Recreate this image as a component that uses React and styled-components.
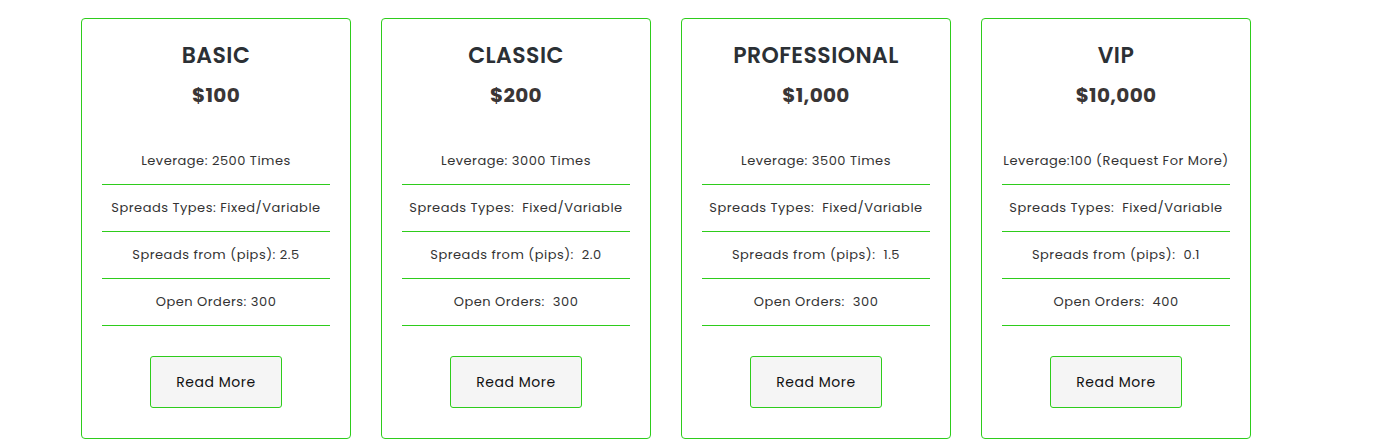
import React from "react";
import styled, { createGlobalStyle } from "styled-components";

const Global = createGlobalStyle`
  html, body { margin: 0; padding: 0; background: #fff; }
  body { font-family: "Poppins", "Inter", "Noto Sans", sans-serif; }
`;

const GREEN = "#2ecc1c";

const Page = styled.div`
  display: flex;
  gap: 30px;
  padding: 18px 0 0 81px;
`;

const Card = styled.div`
  width: 228px;
  border: 1px solid ${GREEN};
  border-radius: 4px;
  padding: 22px 20px 30px;
  box-sizing: content-box;
  display: flex;
  flex-direction: column;
  align-items: stretch;
`;

const Title = styled.h3`
  margin: 0;
  font-size: 22px;
  line-height: 30px;
  font-weight: 600;
  text-align: center;
  color: #2b3035;
  letter-spacing: 0.45px;
`;

const Price = styled.div`
  margin-top: 9px;
  font-size: 20px;
  line-height: 30px;
  font-weight: 700;
  text-align: center;
  color: #3a3636;
  letter-spacing: 0.3px;
`;

const List = styled.ul`
  list-style: none;
  margin: 28px 0 0;
  padding: 0;
`;

const Item = styled.li`
  height: 46px;
  border-bottom: 1px solid ${GREEN};
  display: flex;
  align-items: center;
  justify-content: center;
  font-size: 13px;
  letter-spacing: 0.5px;
  color: #333;
  white-space: pre;
`;

const Button = styled.button`
  align-self: center;
  margin-top: 30px;
  width: 132px;
  height: 52px;
  background: #f5f5f5;
  border: 1px solid ${GREEN};
  border-radius: 3px;
  font-family: inherit;
  font-size: 14px;
  letter-spacing: 0.5px;
  color: #111;
  cursor: pointer;
`;

const plans = [
  { name: "BASIC", price: "$100", items: ["Leverage: 2500 Times", "Spreads Types: Fixed/Variable", "Spreads from (pips): 2.5", "Open Orders: 300"] },
  { name: "CLASSIC", price: "$200", items: ["Leverage: 3000 Times", "Spreads Types:  Fixed/Variable", "Spreads from (pips):  2.0", "Open Orders:  300"] },
  { name: "PROFESSIONAL", price: "$1,000", items: ["Leverage: 3500 Times", "Spreads Types:  Fixed/Variable", "Spreads from (pips):  1.5", "Open Orders:  300"] },
  { name: "VIP", price: "$10,000", items: ["Leverage:100 (Request For More)", "Spreads Types:  Fixed/Variable", "Spreads from (pips):  0.1", "Open Orders:  400"] },
];

export default function App() {
  return (
    <>
      <Global />
      <Page>
        {plans.map((p) => (
          <Card key={p.name}>
            <Title>{p.name}</Title>
            <Price>{p.price}</Price>
            <List>
              {p.items.map((t) => (
                <Item key={t}>{t}</Item>
              ))}
            </List>
            <Button>Read More</Button>
          </Card>
        ))}
      </Page>
    </>
  );
}
